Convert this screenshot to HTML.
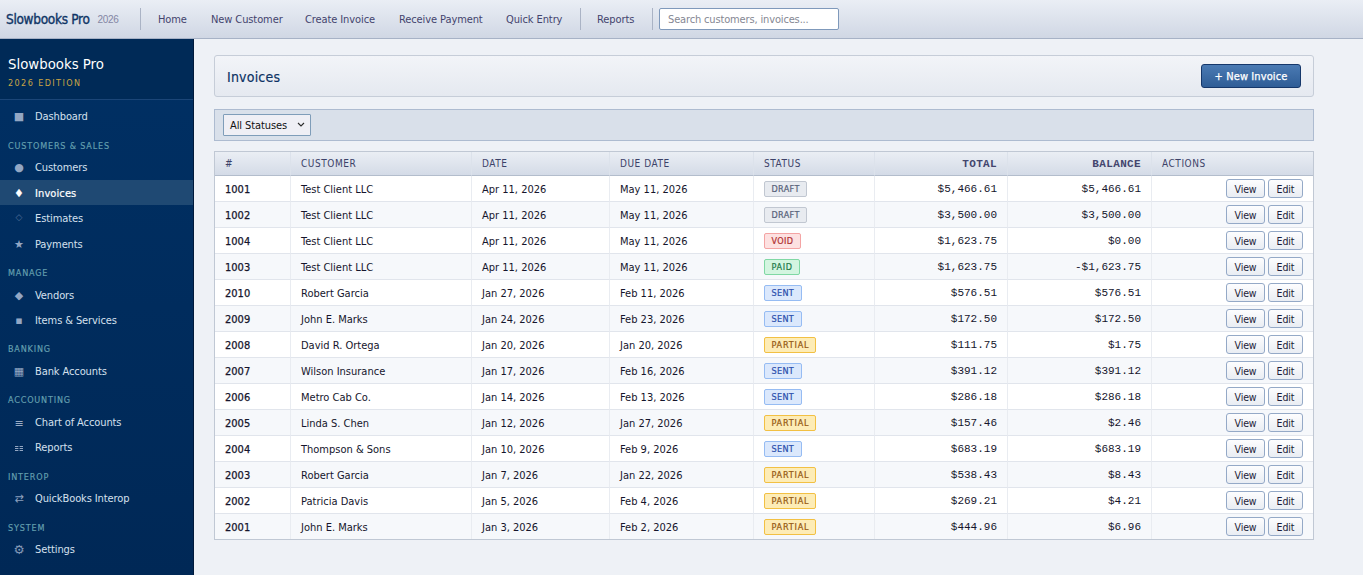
<!DOCTYPE html>
<html lang="en"><head><meta charset="utf-8"><title>Slowbooks Pro 2026 - Invoices</title>
<style>
*{box-sizing:border-box}
html,body{margin:0;padding:0}
body{width:1363px;height:575px;overflow:hidden;background:#eef1f6;font-family:"DejaVu Sans Condensed","Liberation Sans",sans-serif;font-size:11px;letter-spacing:0;color:#1a1a2e;position:relative}
#top{position:absolute;left:0;top:0;width:1363px;height:39px;background:linear-gradient(#eaeef5,#d0d7e4);border-bottom:1px solid #a7b2c6;}
#top .brand{position:absolute;left:6px;top:10.5px;font-size:13.5px;color:#0f3566;-webkit-text-stroke:0.35px #0f3566;letter-spacing:-0.3px;white-space:nowrap}
#top .yr{position:absolute;left:97.5px;top:14px;font-size:10px;color:#8486a4;font-family:"Liberation Sans",sans-serif;letter-spacing:-0.3px}
#top .sep{position:absolute;top:8px;width:1px;height:22px;background:#aab3c5}
#top a{position:absolute;top:12.5px;font-size:11px;letter-spacing:-0.1px;color:#44446e;white-space:nowrap;text-decoration:none}
#top .search{position:absolute;left:659px;top:8px;width:180px;height:22px;border:1px solid #7f99bb;background:#fff;border-radius:2px;font-size:11px;color:#858793;letter-spacing:-0.15px;padding:3.5px 8px;white-space:nowrap;overflow:hidden}
#side{position:absolute;left:0;top:39px;width:194px;height:536px;background:linear-gradient(#003064,#002856);border-right:1px solid #001a3b}
#side .hd{height:61px;background:#002a57;border-bottom:1px solid #1b4577;padding:15px 8px 0 8px}
#side .hd .t{font-size:14.8px;color:#fff;letter-spacing:0;line-height:19px;white-space:nowrap}
#side .hd .e{font-size:9px;color:#c9a545;letter-spacing:1.4px;margin-top:5px;line-height:11px}
#side .it{position:absolute;left:0;width:193px;height:25px;line-height:27px;letter-spacing:-0.1px;color:#d5e0ee;padding-left:35px;white-space:nowrap}
#side .it i{position:absolute;left:10px;width:18px;text-align:center;font-style:normal;color:#93a7c4;font-size:11px;letter-spacing:0;font-family:"DejaVu Sans",sans-serif}
#side .it.act{background:#1f4973;color:#fff;letter-spacing:0.1px;-webkit-text-stroke:0.2px #fff}
#side .it.act i{color:#fff}
#side .sec{position:absolute;left:0;width:193px;height:25px;padding:12px 0 0 8px;font-size:9px;line-height:11px;color:#65a0b0;-webkit-text-stroke:0.15px #65a0b0;letter-spacing:0.82px;white-space:nowrap}
#ph{position:absolute;left:214px;top:55px;width:1100px;height:42px;border:1px solid #c6cdd8;border-radius:3px;background:linear-gradient(#f2f4f8,#e5e9f0)}
#ph h1{position:absolute;left:12px;top:12px;margin:0;font-size:14px;font-weight:normal;color:#0b3163;-webkit-text-stroke:0.15px #0b3163;letter-spacing:0.2px;line-height:19px}
#ph .nb{position:absolute;left:986px;top:8px;width:100px;height:24px;border:1px solid #15376a;border-radius:3px;background:linear-gradient(#4a7ab3,#2f5d96);color:#fff;font-size:11px;-webkit-text-stroke:0.25px #fff;letter-spacing:0.1px;text-align:center;line-height:23px;white-space:nowrap}
#fb{position:absolute;left:214px;top:109px;width:1100px;height:32px;border:1px solid #adbbd0;background:#d9e0ea}
#fb .sel{position:absolute;left:8px;top:4px;width:88px;height:22px;border:1px solid #7f9db9;background:#efeff5;border-radius:1px;font-size:11px;letter-spacing:-0.1px;color:#111;line-height:22px;padding-left:6px;white-space:nowrap}
#fb .sel svg{position:absolute;right:5px;top:7px}
table{position:absolute;left:214px;top:151px;width:1100px;border-collapse:separate;border-spacing:0;table-layout:fixed;border:1px solid #c0c8d4;background:#fff}
th{height:24px;background:linear-gradient(#eaeef4,#d4dbe7);border-bottom:1px solid #b3bdcc;border-right:1px solid #dce2eb;font-weight:normal;font-size:10px;color:#3c4268;text-align:left;padding:0 0 0 10px;letter-spacing:0.55px}
th:last-child,td:last-child{border-right:none}
th.m{text-align:right;padding-right:10px;font-family:"Liberation Mono",monospace;font-weight:bold;font-size:11px;letter-spacing:0.35px;color:#44466e}
td{height:26px;border-bottom:1px solid #e1e5ec;border-right:1px solid #e9ecf1;padding:2px 0 0 10px;white-space:nowrap;color:#15152c}
tr:nth-child(even) td{background:#f6f8fb}
tr:last-child td{border-bottom:none;height:25px}
td.b{-webkit-text-stroke:0.25px #15152c}
td.m{text-align:right;padding:0 10px 0 0;font-family:"Liberation Mono",monospace;font-size:11px;letter-spacing:0}
td.ac{text-align:right;padding:0 10px 0 0;font-size:0}
td.s{padding-top:1px;font-size:0}
button{font-family:inherit;font-size:10.5px;letter-spacing:-0.1px;height:19px;border:1px solid #94a9c7;border-radius:3px;background:linear-gradient(#fdfdfe,#e9edf3);color:#1c1c38;padding:0;margin:0 0 0 3px;vertical-align:middle}
button:nth-child(1){width:39px}
button:nth-child(2){width:35px}
.bd{display:inline-block;height:16px;line-height:14px;border:1px solid;border-radius:2px;font-size:9px;-webkit-text-stroke:0.22px;padding:0 6.5px;letter-spacing:0.35px;vertical-align:middle}
.draft{background:#e8ebf0;border-color:#c1c7d1;color:#58627a}
.void{background:#fde1e1;border-color:#f4a4a4;color:#b03030}
.paid{background:#d3f5e0;border-color:#80d8a4;color:#1f7a4a;letter-spacing:0.7px;padding-right:6px}
.sent{background:#dbe8fc;border-color:#96bcf3;color:#2c50ad}
.partial{background:#fdecb6;border-color:#f2c043;color:#965a12;letter-spacing:0.8px;padding-right:6px}
</style></head><body>
<div id="top">
<div class="brand">Slowbooks Pro</div><div class="yr">2026</div>
<div class="sep" style="left:140px"></div>
<a style="left:158px">Home</a><a style="left:211px">New Customer</a><a style="left:305px">Create Invoice</a><a style="left:399px">Receive Payment</a><a style="left:506px">Quick Entry</a>
<div class="sep" style="left:580px"></div>
<a style="left:597px">Reports</a>
<div class="sep" style="left:652px"></div>
<div class="search">Search customers, invoices...</div>
</div>
<div id="side">
<div class="hd"><div class="t">Slowbooks Pro</div><div class="e">2026 EDITION</div></div>
<div class="it" style="top:64px"><i>&#9632;</i>Dashboard</div>
<div class="sec" style="top:90px">CUSTOMERS &amp; SALES</div>
<div class="it" style="top:115px"><i>&#9679;</i>Customers</div>
<div class="it act" style="top:141px"><i>&#9830;</i>Invoices</div>
<div class="it" style="top:166px"><i style="color:#4f6f98;font-size:9px;margin-top:-1px">&#9671;</i>Estimates</div>
<div class="it" style="top:192px"><i>&#9733;</i>Payments</div>
<div class="sec" style="top:217px">MANAGE</div>
<div class="it" style="top:243px"><i>&#9670;</i>Vendors</div>
<div class="it" style="top:268px"><i>&#9642;</i>Items &amp; Services</div>
<div class="sec" style="top:293px">BANKING</div>
<div class="it" style="top:319px"><i>&#9638;</i>Bank Accounts</div>
<div class="sec" style="top:344px">ACCOUNTING</div>
<div class="it" style="top:370px"><i style="margin-top:1px;color:#9aacc6">&#8801;</i>Chart of Accounts</div>
<div class="it" style="top:395px"><svg style="position:absolute;left:15px;top:12px" width="8" height="5" viewBox="0 0 8 5"><g fill="#93a6c2"><rect x="0" y="0" width="3.4" height="1"/><rect x="4.6" y="0" width="3.4" height="1"/><rect x="0" y="2" width="3.4" height="1"/><rect x="4.6" y="2" width="3.4" height="1"/><rect x="0" y="4" width="3.4" height="1"/><rect x="4.6" y="4" width="3.4" height="1"/></g></svg>Reports</div>
<div class="sec" style="top:421px">INTEROP</div>
<div class="it" style="top:446px"><i style="color:#8b9fbd">&#8644;</i>QuickBooks Interop</div>
<div class="sec" style="top:472px">SYSTEM</div>
<div class="it" style="top:497px"><i style="color:#8297b6;font-size:12.5px">&#9881;</i>Settings</div>
</div>
<div id="ph"><h1>Invoices</h1><div class="nb">+ New Invoice</div></div>
<div id="fb"><div class="sel">All Statuses<svg width="8" height="6" viewBox="0 0 8 6"><path d="M1 1 L4 4 L7 1" fill="none" stroke="#2a2a2a" stroke-width="1.1"/></svg></div></div>
<table>
<colgroup><col style="width:76px"><col style="width:181px"><col style="width:138px"><col style="width:144px"><col style="width:121px"><col style="width:133px"><col style="width:144px"><col></colgroup>
<thead><tr><th>#</th><th>CUSTOMER</th><th>DATE</th><th>DUE DATE</th><th>STATUS</th><th class="m">TOTAL</th><th class="m">BALANCE</th><th>ACTIONS</th></tr></thead>
<tbody>
<tr><td class="b">1001</td><td>Test Client LLC</td><td>Apr 11, 2026</td><td>May 11, 2026</td><td class="s"><span class="bd draft">DRAFT</span></td><td class="m">$5,466.61</td><td class="m">$5,466.61</td><td class="ac"><button>View</button><button>Edit</button></td></tr>
<tr><td class="b">1002</td><td>Test Client LLC</td><td>Apr 11, 2026</td><td>May 11, 2026</td><td class="s"><span class="bd draft">DRAFT</span></td><td class="m">$3,500.00</td><td class="m">$3,500.00</td><td class="ac"><button>View</button><button>Edit</button></td></tr>
<tr><td class="b">1004</td><td>Test Client LLC</td><td>Apr 11, 2026</td><td>May 11, 2026</td><td class="s"><span class="bd void">VOID</span></td><td class="m">$1,623.75</td><td class="m">$0.00</td><td class="ac"><button>View</button><button>Edit</button></td></tr>
<tr><td class="b">1003</td><td>Test Client LLC</td><td>Apr 11, 2026</td><td>May 11, 2026</td><td class="s"><span class="bd paid">PAID</span></td><td class="m">$1,623.75</td><td class="m">-$1,623.75</td><td class="ac"><button>View</button><button>Edit</button></td></tr>
<tr><td class="b">2010</td><td>Robert Garcia</td><td>Jan 27, 2026</td><td>Feb 11, 2026</td><td class="s"><span class="bd sent">SENT</span></td><td class="m">$576.51</td><td class="m">$576.51</td><td class="ac"><button>View</button><button>Edit</button></td></tr>
<tr><td class="b">2009</td><td>John E. Marks</td><td>Jan 24, 2026</td><td>Feb 23, 2026</td><td class="s"><span class="bd sent">SENT</span></td><td class="m">$172.50</td><td class="m">$172.50</td><td class="ac"><button>View</button><button>Edit</button></td></tr>
<tr><td class="b">2008</td><td>David R. Ortega</td><td>Jan 20, 2026</td><td>Jan 20, 2026</td><td class="s"><span class="bd partial">PARTIAL</span></td><td class="m">$111.75</td><td class="m">$1.75</td><td class="ac"><button>View</button><button>Edit</button></td></tr>
<tr><td class="b">2007</td><td>Wilson Insurance</td><td>Jan 17, 2026</td><td>Feb 16, 2026</td><td class="s"><span class="bd sent">SENT</span></td><td class="m">$391.12</td><td class="m">$391.12</td><td class="ac"><button>View</button><button>Edit</button></td></tr>
<tr><td class="b">2006</td><td>Metro Cab Co.</td><td>Jan 14, 2026</td><td>Feb 13, 2026</td><td class="s"><span class="bd sent">SENT</span></td><td class="m">$286.18</td><td class="m">$286.18</td><td class="ac"><button>View</button><button>Edit</button></td></tr>
<tr><td class="b">2005</td><td>Linda S. Chen</td><td>Jan 12, 2026</td><td>Jan 27, 2026</td><td class="s"><span class="bd partial">PARTIAL</span></td><td class="m">$157.46</td><td class="m">$2.46</td><td class="ac"><button>View</button><button>Edit</button></td></tr>
<tr><td class="b">2004</td><td>Thompson &amp; Sons</td><td>Jan 10, 2026</td><td>Feb 9, 2026</td><td class="s"><span class="bd sent">SENT</span></td><td class="m">$683.19</td><td class="m">$683.19</td><td class="ac"><button>View</button><button>Edit</button></td></tr>
<tr><td class="b">2003</td><td>Robert Garcia</td><td>Jan 7, 2026</td><td>Jan 22, 2026</td><td class="s"><span class="bd partial">PARTIAL</span></td><td class="m">$538.43</td><td class="m">$8.43</td><td class="ac"><button>View</button><button>Edit</button></td></tr>
<tr><td class="b">2002</td><td>Patricia Davis</td><td>Jan 5, 2026</td><td>Feb 4, 2026</td><td class="s"><span class="bd partial">PARTIAL</span></td><td class="m">$269.21</td><td class="m">$4.21</td><td class="ac"><button>View</button><button>Edit</button></td></tr>
<tr><td class="b">2001</td><td>John E. Marks</td><td>Jan 3, 2026</td><td>Feb 2, 2026</td><td class="s"><span class="bd partial">PARTIAL</span></td><td class="m">$444.96</td><td class="m">$6.96</td><td class="ac"><button>View</button><button>Edit</button></td></tr>
</tbody></table>
</body></html>
